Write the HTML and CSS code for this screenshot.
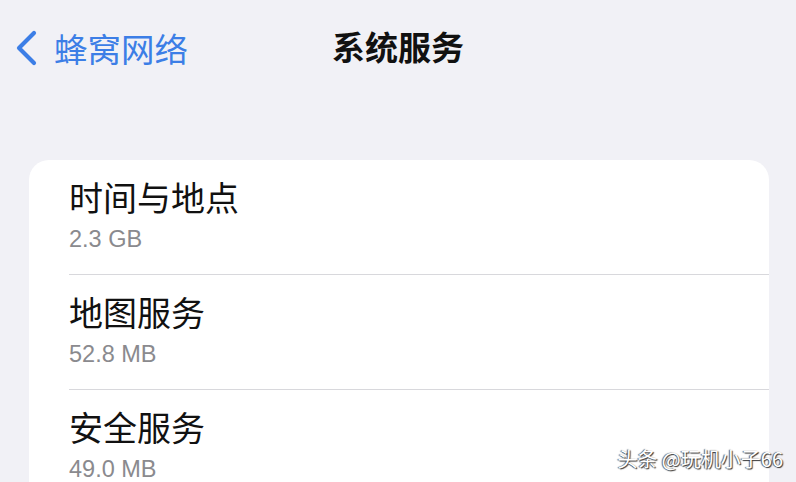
FILE: index.html
```html
<!DOCTYPE html>
<html lang="zh">
<head>
<meta charset="utf-8">
<link rel="stylesheet" href="styles.css">
</head>
<body>
<div class="screen">
  <header class="nav">
    <div class="back">
      <svg class="chev" width="24" height="36" viewBox="0 0 24 36"><path d="M20 3 L5 18 L20 33" fill="none" stroke="#3c7ee6" stroke-width="4.2" stroke-linecap="round" stroke-linejoin="round"/></svg>
      <span class="back-text">蜂窝网络</span>
    </div>
    <div class="title">系统服务</div>
  </header>
  <section class="card">
    <div class="row">
      <div class="row-title">时间与地点</div>
      <div class="row-sub">2.3 GB</div>
    </div>
    <div class="row">
      <div class="row-title">地图服务</div>
      <div class="row-sub">52.8 MB</div>
    </div>
    <div class="row">
      <div class="row-title">安全服务</div>
      <div class="row-sub">49.0 MB</div>
    </div>
  </section>
  <div class="watermark">头条 @玩机小子66</div>
</div>
</body>
</html>
```
FILE: styles.css
```css
html, body {
  margin: 0;
  padding: 0;
  background: #f1f1f6;
}
.screen {
  position: relative;
  width: 796px;
  height: 482px;
  overflow: hidden;
  font-family: "Noto Sans CJK SC", "Noto Sans", sans-serif;
}
.nav {
  position: relative;
  height: 92px;
  display: flex;
  align-items: flex-start;
}
.back {
  display: flex;
  align-items: center;
  padding: 28px 0 0 14px;
  gap: 16px;
}
.chev {
  display: block;
}
.back-text {
  color: #3c7ee6;
  font-size: 33.5px;
  line-height: 40px;
}
.title {
  position: absolute;
  left: 0;
  right: 0;
  top: 26px;
  text-align: center;
  font-size: 33px;
  line-height: 40px;
  font-weight: 700;
  color: #111;
}
.card {
  margin: 68px 27px 0 29px;
  background: #fff;
  border-radius: 20px 20px 0 0;
  padding-left: 40px;
}
.row {
  height: 115px;
  box-sizing: border-box;
  padding-top: 17px;
  border-bottom: 1px solid #d8d8dc;
}
.row-title {
  font-size: 34px;
  line-height: 40px;
  color: #111;
}
.row-sub {
  margin-top: 7px;
  font-family: "Liberation Sans", Arial, sans-serif;
  font-size: 23.5px;
  line-height: 30px;
  color: #8a8a8e;
}
.watermark {
  position: absolute;
  right: 13px;
  bottom: 10px;
  font-size: 20px;
  line-height: 26px;
  color: #fff;
  text-shadow: 1px 1px 1px #333, -1px 0 1px #555;
}
```
